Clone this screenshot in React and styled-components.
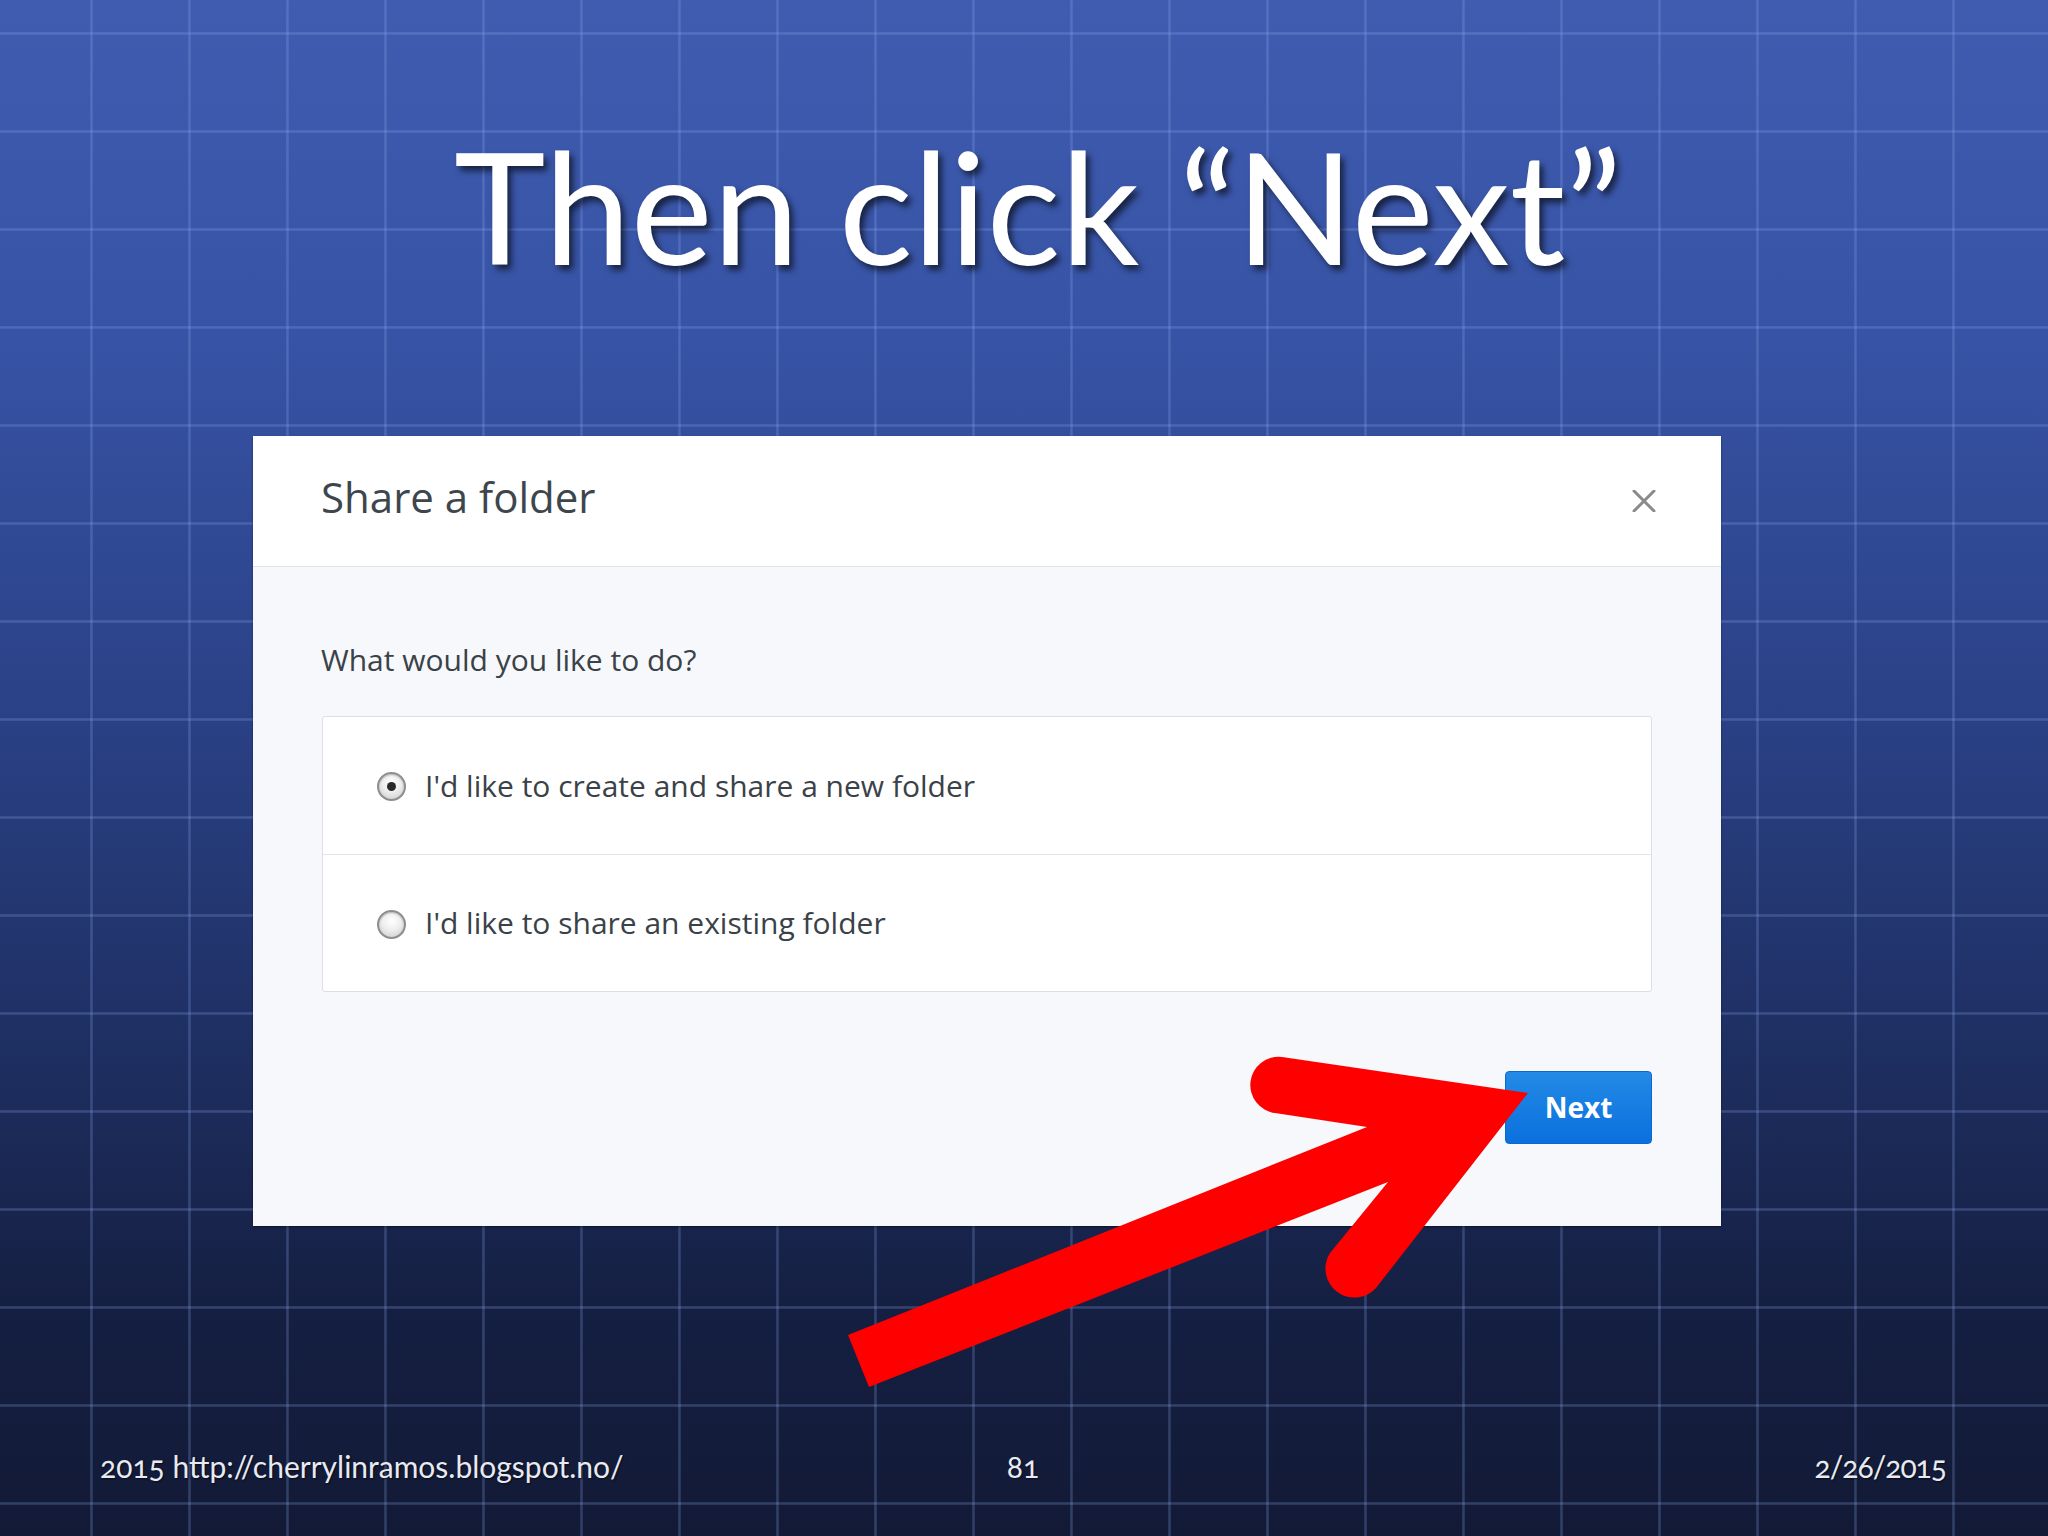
import React from "react";
import styled, { createGlobalStyle } from "styled-components";

const GlobalStyle = createGlobalStyle`
  html, body { margin: 0; padding: 0; }
  body { background: #121a35; }
  * { box-sizing: border-box; }
`;

const Slide = styled.div`
  position: relative;
  width: 2048px;
  height: 1536px;
  overflow: hidden;
  display: flex;
  flex-direction: column;
  background-color: #24377a;
  background-image:
    linear-gradient(to right, rgba(140, 170, 240, 0.14) 0, rgba(140, 170, 240, 0.26) 1px, rgba(140, 170, 240, 0.26) 2px, rgba(140, 170, 240, 0.12) 3px, transparent 3px),
    linear-gradient(to bottom, rgba(140, 170, 240, 0.14) 0, rgba(140, 170, 240, 0.26) 1px, rgba(140, 170, 240, 0.26) 2px, rgba(140, 170, 240, 0.12) 3px, transparent 3px),
    linear-gradient(180deg, #3f5cb1 0%, #3753a5 22%, #2b4288 45%, #1e2f62 68%, #151f42 85%, #121a36 100%);
  background-size: 98px 98px, 98px 98px, 100% 100%;
  background-position: 90px 0, 0 32px, 0 0;
`;

const Title = styled.h1`
  margin: 0;
  padding-top: 115px;
  height: 295px;
  line-height: 180px;
  font-family: Lato, "Open Sans", sans-serif;
  font-weight: 400;
  font-size: 155px;
  color: #ffffff;
  text-align: center;
  padding-left: 28px;
  text-shadow: 4px 5px 6px rgba(0, 0, 0, 0.6);
`;

const Dialog = styled.div`
  margin-top: 141px;
  margin-left: 253px;
  width: 1468px;
  background: #f7f8fb;
  box-shadow: 0 1px 2px rgba(0, 0, 0, 0.45);
  font-family: "Open Sans", sans-serif;
`;

const DialogHeader = styled.div`
  height: 131px;
  background: #ffffff;
  border-bottom: 1px solid #e1e3e7;
  display: flex;
  align-items: center;
  justify-content: space-between;
  padding: 0 64px 0 68px;
`;

const DialogTitle = styled.h2`
  margin: 0;
  font-size: 42px;
  font-weight: 400;
  color: #3d464d;
  line-height: 50px;
  margin-top: -8px;
`;

const CloseButton = styled.button`
  width: 26px;
  height: 26px;
  padding: 0;
  border: none;
  background: none;
  display: flex;
  align-items: center;
  justify-content: center;
  cursor: pointer;
`;

const DialogBody = styled.div`
  padding: 72px 69px 82px 69px;
  display: flex;
  flex-direction: column;
`;

const Question = styled.p`
  margin: 0 0 35px -1px;
  font-size: 30px;
  line-height: 42px;
  color: #3a4248;
`;

const OptionList = styled.div`
  background: #ffffff;
  border: 1px solid #dcdfe3;
  border-radius: 3px;
  display: flex;
  flex-direction: column;
`;

const OptionRow = styled.label`
  height: 137px;
  display: flex;
  align-items: center;
  gap: 19px;
  padding-left: 54px;
  border-top: ${(p) => (p.$first ? "none" : "1px solid #e2e4e8")};
  cursor: pointer;
`;

const Radio = styled.span`
  width: 29px;
  height: 29px;
  border-radius: 50%;
  flex: none;
  border: 2px solid #8e8e8e;
  background: radial-gradient(circle at 50% 35%, #ffffff 0%, #eeeeee 45%, #c9c9c9 100%);
  box-shadow: inset 0 1px 2px rgba(0, 0, 0, 0.25);
  display: flex;
  align-items: center;
  justify-content: center;
  margin-top: 2px;

  &::after {
    content: "";
    width: 9px;
    height: 9px;
    border-radius: 50%;
    background: ${(p) => (p.$checked ? "#2a2a2a" : "transparent")};
  }
`;

const OptionText = styled.span`
  font-size: 30px;
  line-height: 42px;
  color: #3a4248;
`;

const ButtonRow = styled.div`
  margin-top: 79px;
  display: flex;
  justify-content: flex-end;
`;

const PrimaryButton = styled.button`
  width: 147px;
  height: 73px;
  border-radius: 4px;
  border: 1px solid #0c68cf;
  background: linear-gradient(180deg, #238ae6 0%, #0a70de 100%);
  color: #ffffff;
  font-family: "Open Sans", sans-serif;
  font-weight: 700;
  font-size: 28px;
  cursor: pointer;
  padding: 0 0 2px 0;
`;

const Footer = styled.div`
  margin-top: auto;
  padding: 0 102px 53px 100px;
  display: grid;
  grid-template-columns: 1fr auto 1fr;
  align-items: center;
  font-family: Lato, "Open Sans", sans-serif;
  font-size: 30px;
  line-height: 34px;
  color: #e8eaf2;
  font-variant-numeric: oldstyle-nums;
  text-shadow: 1px 1px 2px rgba(0, 0, 0, 0.6);
`;

const FooterCell = styled.span`
  text-align: ${(p) => p.$align || "left"};
  letter-spacing: ${(p) => p.$tight ? "-1px" : "0"};
`;

const Overlay = styled.svg`
  position: absolute;
  left: 0;
  top: 0;
  width: 2048px;
  height: 1536px;
  pointer-events: none;
`;

function CloseIcon() {
  return (
    <svg width="24" height="22" viewBox="0 0 24 22">
      <path d="M2 1 L22 21 M22 1 L2 21" stroke="#8a8a8a" strokeWidth="3" strokeLinecap="round" fill="none" />
    </svg>
  );
}

export default function App() {
  return (
    <>
      <GlobalStyle />
      <Slide>
        <Title>Then click “Next”</Title>
        <Dialog>
          <DialogHeader>
            <DialogTitle>Share a folder</DialogTitle>
            <CloseButton aria-label="Close">
              <CloseIcon />
            </CloseButton>
          </DialogHeader>
          <DialogBody>
            <Question>What would you like to do?</Question>
            <OptionList>
              <OptionRow $first>
                <Radio $checked />
                <OptionText>I'd like to create and share a new folder</OptionText>
              </OptionRow>
              <OptionRow>
                <Radio />
                <OptionText>I'd like to share an existing folder</OptionText>
              </OptionRow>
            </OptionList>
            <ButtonRow>
              <PrimaryButton>Next</PrimaryButton>
            </ButtonRow>
          </DialogBody>
        </Dialog>
        <Footer>
          <FooterCell>2015 http://cherrylinramos.blogspot.no/</FooterCell>
          <FooterCell $align="center">81</FooterCell>
          <FooterCell $align="right" $tight>2/26/2015</FooterCell>
        </Footer>
        <Overlay viewBox="0 0 2048 1536">
          <path
            d="M1528 1093 L1282 1057 A28 28 0 0 0 1275 1113 L1367 1127 L848 1335 L869 1387 L1388 1182 L1330 1253 A29 29 0 0 0 1376 1288 Z"
            fill="#ff0000"
          />
        </Overlay>
      </Slide>
    </>
  );
}
